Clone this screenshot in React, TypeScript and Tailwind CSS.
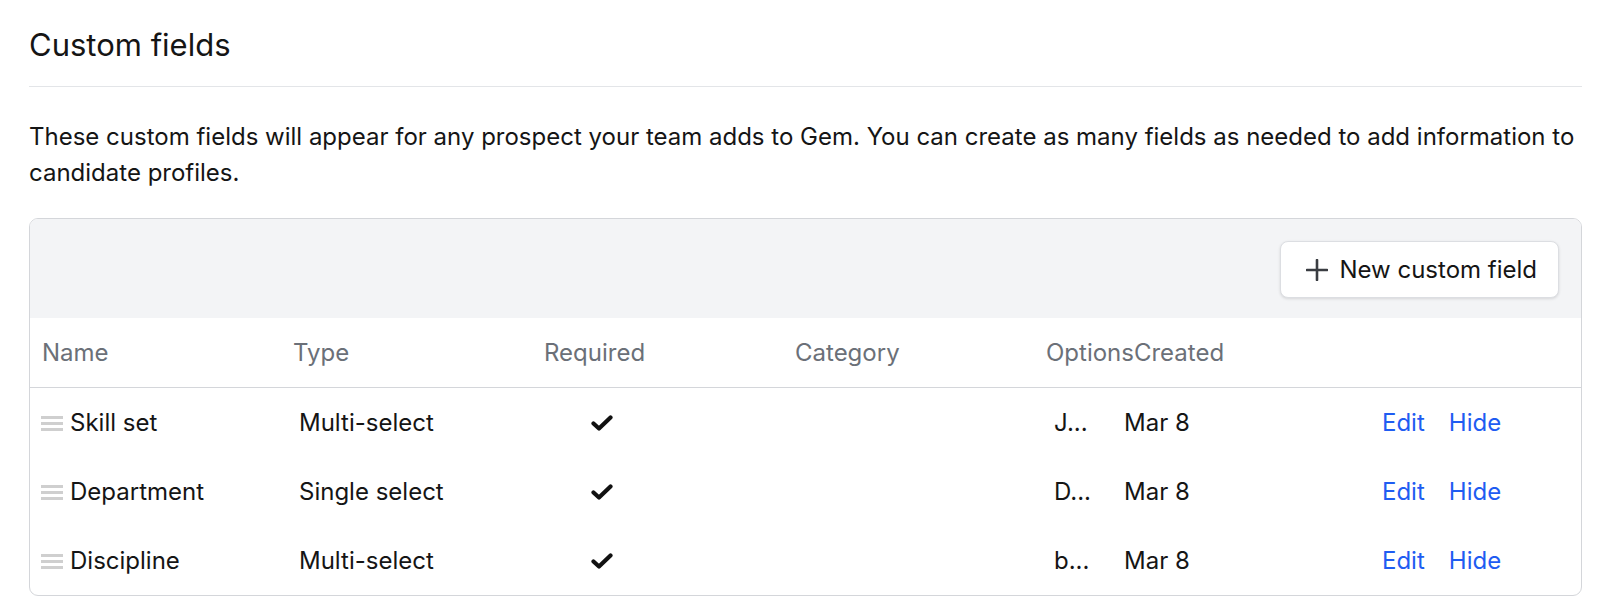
import React from 'react'

type FieldRow = {
  name: string
  type: string
  options: string
  created: string
}

const rows: FieldRow[] = [
  { name: 'Skill set', type: 'Multi-select', options: 'J...', created: 'Mar 8' },
  { name: 'Department', type: 'Single select', options: 'D...', created: 'Mar 8' },
  { name: 'Discipline', type: 'Multi-select', options: 'b...', created: 'Mar 8' },
]

const DragHandle = () => (
  <svg width="22" height="20" viewBox="0 0 22 20" className="shrink-0">
    <rect x="0" y="3" width="22" height="3" fill="#cfcfcf" />
    <rect x="0" y="9" width="22" height="3" fill="#cfcfcf" />
    <rect x="0" y="15" width="22" height="3" fill="#cfcfcf" />
  </svg>
)

const Check = () => (
  <svg width="22" height="16" viewBox="0 0 22 16">
    <path d="M2.5 8.5 L8 13.5 L19.5 2.5" fill="none" stroke="#111" strokeWidth="4.2" strokeLinecap="round" strokeLinejoin="round" />
  </svg>
)

const Plus = () => (
  <svg width="22" height="22" viewBox="0 0 22 22">
    <path d="M11 1 V21 M1 11 H21" stroke="#3a3d42" strokeWidth="2.6" strokeLinecap="round" />
  </svg>
)

export default function App() {
  return (
    <div className="min-h-[615px] bg-white pl-[29px] pr-[18px] pt-[26px] font-['Inter',sans-serif] text-[#151515]">
      <h1 className="text-[31px] leading-[38px] font-normal">Custom fields</h1>
      <div className="mt-[22px] border-t border-[#e3e5e8]" />
      <p className="mt-[32px] text-[24px] leading-[36px]">
        These custom fields will appear for any prospect your team adds to Gem. You can create as many fields as needed to add information to candidate profiles.
      </p>

      <div className="mt-[27px] overflow-hidden rounded-[9px] border border-[#d4d6da]">
        <div className="flex justify-end bg-[#f3f4f6] pb-[20px] pr-[22px] pt-[22px]">
          <button className="flex h-[57px] items-center gap-[11px] rounded-[8px] border border-[#dcdee2] bg-white pl-[25px] pr-[21px] text-[24px] text-[#151515] shadow-[0_1px_3px_rgba(0,0,0,0.12)]">
            <Plus />
            New custom field
          </button>
        </div>

        <div className="flex h-[70px] items-center border-b border-[#d4d6da] pl-[12px] text-[24px] text-[#6b7078]">
          <div className="w-[251px]">Name</div>
          <div className="w-[251px]">Type</div>
          <div className="w-[251px]">Required</div>
          <div className="w-[251px]">Category</div>
          <div>Options</div>
          <div>Created</div>
        </div>

        {rows.map((row) => (
          <div key={row.name} className="flex h-[69px] items-center pl-[11px] text-[24px]">
            <div className="flex w-[258px] items-center gap-[7px]">
              <DragHandle />
              <span>{row.name}</span>
            </div>
            <div className="w-[292px]">{row.type}</div>
            <div className="w-[463px]">
              <Check />
            </div>
            <div className="w-[70px]">{row.options}</div>
            <div className="w-[258px]">{row.created}</div>
            <div className="flex gap-[24px] text-[#1f5cf2]">
              <span>Edit</span>
              <span>Hide</span>
            </div>
          </div>
        ))}
      </div>
    </div>
  )
}
